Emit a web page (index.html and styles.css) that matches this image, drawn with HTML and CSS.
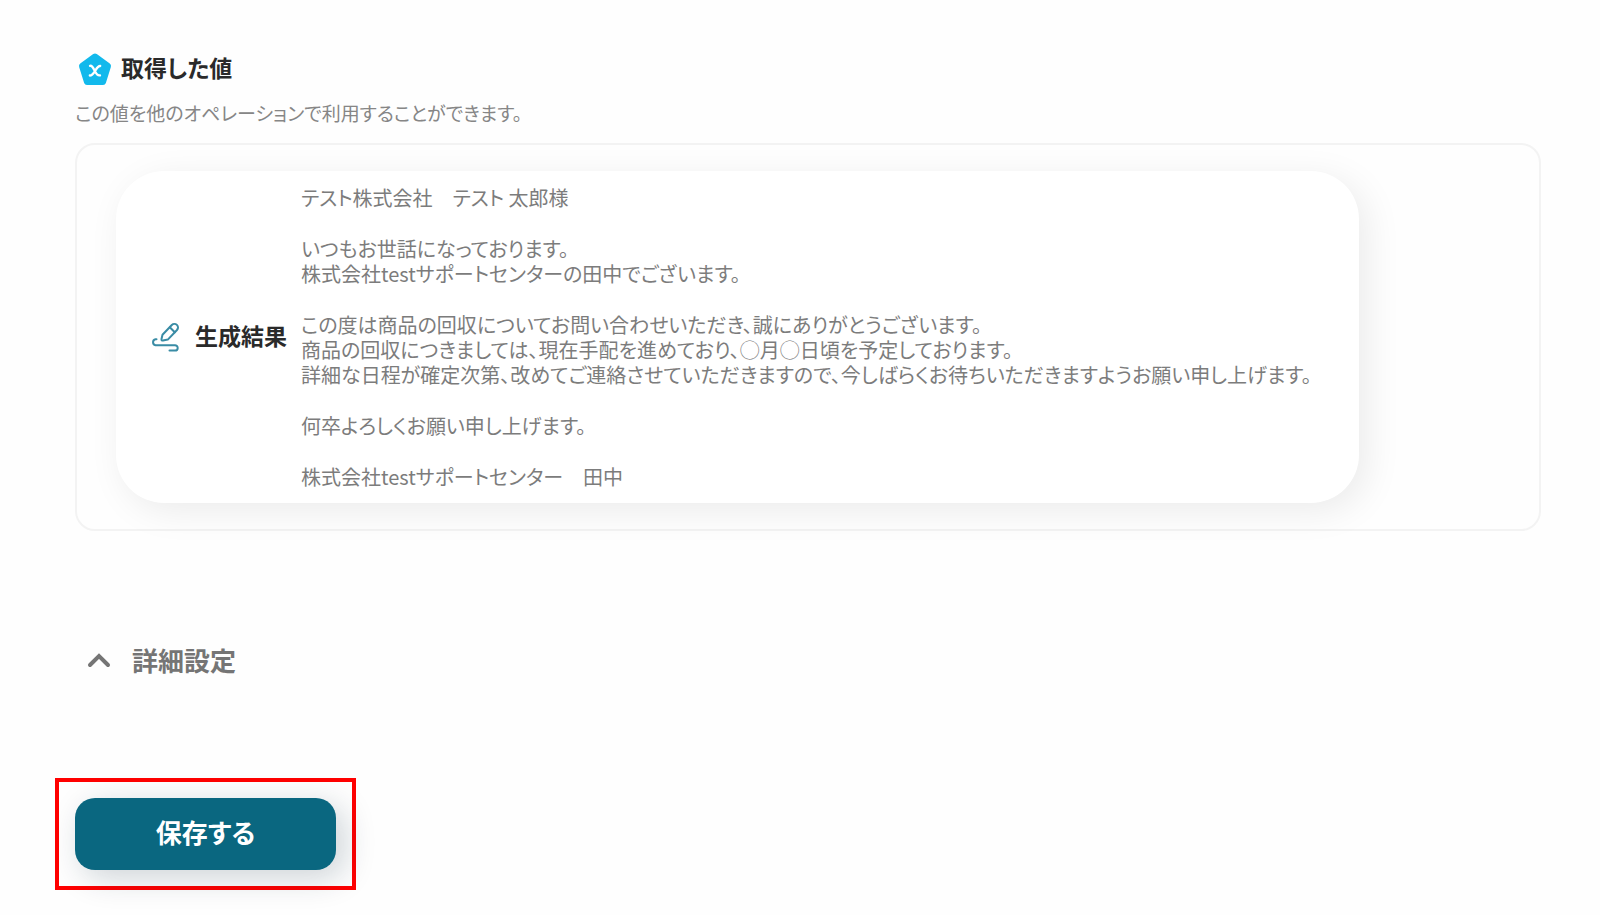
FILE: index.html
```
<!DOCTYPE html>
<html lang="ja">
<head>
	<meta charset="UTF-8">
	<title>取得した値</title>
	<link rel="stylesheet" href="styles.css">
</head>
<body>
	<div class="page">
		<!-- 取得した値 -->
		<section class="output">
			<h2 class="output-title">
				<svg class="output-icon" viewBox="0 0 34 34" aria-hidden="true">
					<path d="M17 4.500 L30 14 L25 30 H9 L4 14 Z" fill="#12b9ec" stroke="#12b9ec" stroke-width="6" stroke-linejoin="round"/>
					<path d="M12 13.800 C16.500 12.800 16.500 24.500 22 23.400 M22.200 14 C18 13.800 16.500 23.600 11.800 23.500" fill="none" stroke="#fff" stroke-width="2.300" stroke-linecap="round"/>
				</svg>
				<span>取得した値</span>
			</h2>
			<p class="output-note">この値を他のオペレーションで利用することができます。</p>
			<div class="output-panel">
				<div class="result">
					<svg class="result-icon" viewBox="0 0 30 30" fill="none" stroke="#3a8ca5" stroke-width="2" stroke-linecap="round" stroke-linejoin="round" aria-hidden="true">
						<path d="M11.500 12.800 L20.800 3 A3.600 3.600 0 0 1 26 8 L16.800 17.600 L12 18.600 Q10.300 18.800 10.500 17 Z"/>
						<path d="M18.800 5.200 L23.800 10.200"/>
						<path d="M5.500 17.300 H4.500 A3 3 0 0 0 4.500 23.200 H24 A2.700 2.700 0 0 1 24 28.600 H18.500"/>
					</svg>
					<h3 class="result-name">生成結果</h3>
					<div class="result-text">
						<p>テスト株式会社　テスト 太郎様</p>
						<p>いつもお世話になっております。<br>株式会社testサポートセンターの田中でございます。</p>
						<p>この度は商品の回収についてお問い合わせいただき、誠にありがとうございます。<br>商品の回収につきましては、現在手配を進めており、◯月◯日頃を予定しております。<br>詳細な日程が確定次第、改めてご連絡させていただきますので、今しばらくお待ちいただきますようお願い申し上げます。</p>
						<p>何卒よろしくお願い申し上げます。</p>
						<p>株式会社testサポートセンター　田中</p>
					</div>
				</div>
			</div>
		</section>

		<!-- 詳細設定 -->
		<button type="button" class="detail-toggle">
			<svg class="detail-arrow" viewBox="0 0 24 16" aria-hidden="true">
				<path d="M3 13 L12 4 L21 13" fill="none" stroke="#757575" stroke-width="4" stroke-linecap="round" stroke-linejoin="miter"/>
			</svg>
			<span>詳細設定</span>
		</button>

		<!-- 保存 -->
		<div class="save-frame">
			<button type="button" class="save-button">保存する</button>
		</div>
	</div>
</body>
</html>
```

FILE: styles.css
```
* {
	box-sizing: border-box;
}
body {
	margin: 0;
	background-color: #fefefe;
	color: #2a2a2a;
	font-family: "Noto Sans CJK JP", sans-serif;
	font-feature-settings: "palt";
}
h2, h3, p {
	margin: 0;
}
button {
	font-family: inherit;
	font-feature-settings: inherit;
	border: none;
	cursor: pointer;
}
.page {
	padding: 52px 59px 22px 75px;
}
.output-title {
	display: flex;
	align-items: center;
	gap: 9px;
	padding-left: 3px;
	font-size: 23px;
	font-weight: 700;
	line-height: 30px;
}
.output-icon {
	width: 34px;
	height: 34px;
}
.output-title span {
	padding-bottom: 4px;
}
.output-note {
	margin: 13px 0 17px;
	color: #868686;
	font-size: 19px;
	line-height: 27px;
}
.output-panel {
	padding: 26px 39px;
	border: 2px solid #f3f3f3;
	border-radius: 20px;
}
.result {
	display: flex;
	align-items: center;
	width: fit-content;
	padding: 14px 48px 14px 35px;
	border-radius: 48px;
	background-color: #fff;
	box-shadow: 8px 8px 36px rgba(0, 0, 0, 0.08);
}
.result-icon {
	flex: none;
	width: 30px;
	height: 30px;
}
.result-name {
	flex: none;
	margin: 0 14px;
	padding-bottom: 4px;
	font-size: 23px;
	font-weight: 700;
	line-height: 30px;
}
.result-text {
	display: flex;
	flex-direction: column;
	gap: 26px;
	color: #7c7c7c;
	font-size: 20px;
	line-height: 25px;
}
.detail-toggle {
	display: flex;
	align-items: center;
	gap: 21px;
	margin-top: 109px;
	padding: 0 12px;
	background: none;
	color: #757575;
	font-size: 26px;
	font-weight: 700;
	line-height: 40px;
}
.detail-arrow {
	width: 24px;
	height: 16px;
}
.save-frame {
	width: fit-content;
	margin: 98px 0 0 -20px;
	padding: 16px;
	border: 4px solid #f00;
}
.save-button {
	display: block;
	min-width: 261px;
	padding: 14px 32px 18px;
	border-radius: 20px;
	background-color: #0a6780;
	box-shadow: 8px 8px 32px rgba(10, 40, 60, 0.2);
	color: #fff;
	font-size: 26px;
	font-weight: 700;
	line-height: 40px;
}
```
